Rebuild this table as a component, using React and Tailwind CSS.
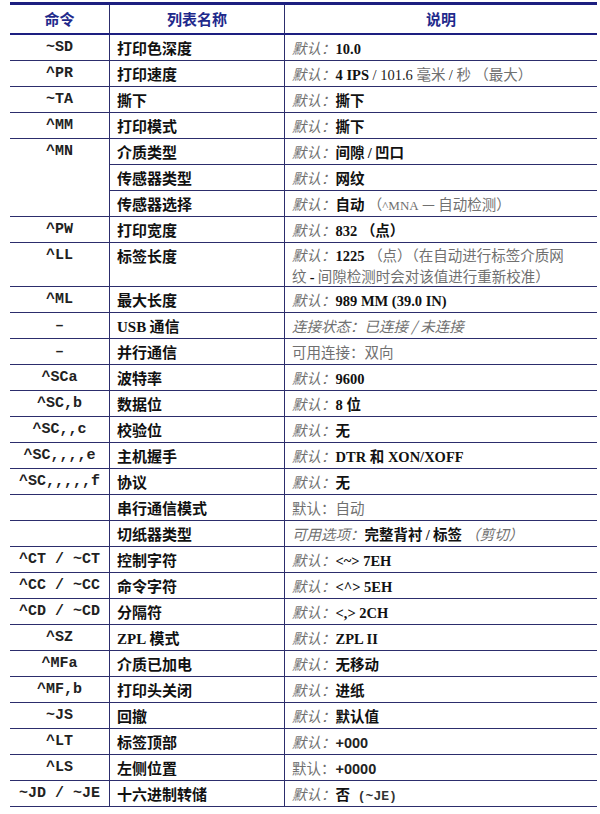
import React from 'react';

const mono = "font-['Liberation_Mono',monospace]";
const cjk = "font-['Noto_Sans_CJK_SC',sans-serif]";
const serif = "font-['Liberation_Serif','Noto_Sans_CJK_SC',serif]";
const sans = "font-['Liberation_Sans','Noto_Sans_CJK_SC',sans-serif]";

// small text helpers
const Def = ({ label = '默认：' }) => (
  <span className={`${cjk} italic text-[#707070]`}>{label}</span>
);
const Plain = ({ children }) => <span className={`${cjk} text-[#707070]`}>{children}</span>;
const B = ({ children }) => <span className={`${serif} font-bold text-[#111]`}>{children}</span>;
const BC = ({ children }) => <span className={`${cjk} font-bold text-[#111]`}>{children}</span>;

const rows = [
  { cmd: '~SD', name: '打印色深度', desc: <><Def /><B>10.0</B></> },
  {
    cmd: '^PR',
    name: '打印速度',
    desc: (
      <>
        <Def />
        <B>4 IPS</B>
        <span className={`${serif} text-[#222]`}> / 101.6 </span>
        <Plain>毫米 </Plain>
        <span className={`${serif} text-[#222]`}>/ </span>
        <Plain>秒 （最大）</Plain>
      </>
    ),
  },
  { cmd: '~TA', name: '撕下', desc: <><Def /><BC>撕下</BC></> },
  { cmd: '^MM', name: '打印模式', desc: <><Def /><BC>撕下</BC></> },
  {
    cmd: '^MN',
    group: [
      { name: '介质类型', desc: <><Def /><BC>间隙 </BC><B>/</B><BC> 凹口</BC></> },
      { name: '传感器类型', desc: <><Def /><BC>网纹</BC></> },
      {
        name: '传感器选择',
        desc: (
          <>
            <Def />
            <BC>自动</BC>
            <Plain> （</Plain>
            <span className={`${serif} text-[13px] text-[#707070]`}>^MNA</span>
            <Plain> — 自动检测）</Plain>
          </>
        ),
      },
    ],
  },
  { cmd: '^PW', name: '打印宽度', desc: <><Def /><B>832 </B><BC>（点）</BC></> },
  {
    cmd: '^LL',
    name: '标签长度',
    tall: true,
    desc: (
      <>
        <Def />
        <B>1225 </B>
        <Plain>（点）（在自动进行标签介质网</Plain>
        <br />
        <Plain>纹 </Plain>
        <B>-</B>
        <Plain> 间隙检测时会对该值进行重新校准）</Plain>
      </>
    ),
  },
  { cmd: '^ML', name: '最大长度', desc: <><Def /><B>989 MM (39.0 IN)</B></> },
  {
    cmd: '–',
    name: <><span className={`${serif} font-bold`}>USB</span> 通信</>,
    desc: <span className={`${cjk} italic text-[#707070]`}>连接状态：已连接 / 未连接</span>,
  },
  { cmd: '–', name: '并行通信', desc: <Plain>可用连接：双向</Plain> },
  { cmd: '^SCa', name: '波特率', desc: <><Def /><B>9600</B></> },
  { cmd: '^SC,b', name: '数据位', desc: <><Def /><B>8 </B><BC>位</BC></> },
  { cmd: '^SC,,c', name: '校验位', desc: <><Def /><BC>无</BC></> },
  { cmd: '^SC,,,,e', name: '主机握手', desc: <><Def /><B>DTR </B><BC>和</BC><B> XON/XOFF</B></> },
  { cmd: '^SC,,,,,f', name: '协议', desc: <><Def /><BC>无</BC></> },
  { cmd: '', name: '串行通信模式', desc: <Plain>默认：自动</Plain> },
  {
    cmd: '',
    name: '切纸器类型',
    desc: (
      <>
        <Def label="可用选项：" />
        <BC>完整背衬 </BC>
        <B>/</B>
        <BC> 标签</BC>
        <span className={`${cjk} italic text-[#707070]`}> （剪切）</span>
      </>
    ),
  },
  { cmd: '^CT / ~CT', name: '控制字符', desc: <><Def /><B>&lt;~&gt; 7EH</B></> },
  { cmd: '^CC / ~CC', name: '命令字符', desc: <><Def /><B>&lt;^&gt; 5EH</B></> },
  { cmd: '^CD / ~CD', name: '分隔符', desc: <><Def /><B>&lt;,&gt; 2CH</B></> },
  {
    cmd: '^SZ',
    name: <><span className={`${serif} font-bold`}>ZPL</span> 模式</>,
    desc: <><Def /><B>ZPL II</B></>,
  },
  { cmd: '^MFa', name: '介质已加电', desc: <><Def /><BC>无移动</BC></> },
  { cmd: '^MF,b', name: '打印头关闭', desc: <><Def /><BC>进纸</BC></> },
  { cmd: '~JS', name: '回撤', desc: <><Def /><BC>默认值</BC></> },
  {
    cmd: '^LT',
    name: '标签顶部',
    desc: <><Def /><span className={`${sans} font-bold text-[#222]`}>+000</span></>,
  },
  {
    cmd: '^LS',
    name: '左侧位置',
    desc: <><Plain>默认：</Plain><span className={`${sans} font-bold text-[#222]`}>+0000</span></>,
  },
  {
    cmd: '~JD / ~JE',
    name: '十六进制转储',
    desc: (
      <>
        <Def />
        <BC>否</BC>
        <span className={`${mono} font-bold text-[13px] text-[#333]`}> (~JE)</span>
      </>
    ),
  },
];

const line = 'border-[#2c2d6c]';

function CmdCell({ children, className = '' }) {
  return (
    <div
      className={`border-b border-r ${line} ${mono} flex justify-center pt-[3px] text-[15px] leading-[20px] font-bold text-[#222] whitespace-pre ${className}`}
    >
      {children}
    </div>
  );
}

function NameCell({ children, tall }) {
  return (
    <div
      className={`border-b border-r ${line} ${cjk} pl-[7px] pt-[2px] text-[15px] leading-[21px] font-bold text-[#111] ${tall ? 'h-[44px]' : 'h-[26px]'}`}
    >
      {children}
    </div>
  );
}

function DescCell({ children, tall }) {
  return (
    <div
      className={`border-b ${line} pl-[7px] pt-[2px] text-[14.5px] ${tall ? 'h-[44px] leading-[19px]' : 'h-[26px] leading-[21px]'} whitespace-nowrap`}
    >
      {children}
    </div>
  );
}

export default function App() {
  return (
    <div className="bg-white w-[600px] h-[814px] pt-[2px] pl-[10px]">
      <div className="w-[587px] grid grid-cols-[100px_175px_312px] border-t-[3px] border-[#1d1f80]">
        {/* Header */}
        {['命令', '列表名称', '说明'].map((h, i) => (
          <div
            key={h}
            className={`h-[30px] border-b-2 border-[#1d1f80] ${i < 2 ? 'border-r border-r-[#2c2d6c]' : ''} ${cjk} flex items-center justify-center text-[15px] font-bold text-[#1f2a8c]`}
          >
            {h}
          </div>
        ))}

        {rows.map((r, idx) => {
          if (r.group) {
            return (
              <React.Fragment key={idx}>
                <CmdCell className="row-span-3">{r.cmd}</CmdCell>
                {r.group.map((g, j) => (
                  <React.Fragment key={j}>
                    <NameCell>{g.name}</NameCell>
                    <DescCell>{g.desc}</DescCell>
                  </React.Fragment>
                ))}
              </React.Fragment>
            );
          }
          return (
            <React.Fragment key={idx}>
              <CmdCell className={r.tall ? 'h-[44px]' : 'h-[26px]'}>{r.cmd}</CmdCell>
              <NameCell tall={r.tall}>{r.name}</NameCell>
              <DescCell tall={r.tall}>{r.desc}</DescCell>
            </React.Fragment>
          );
        })}
      </div>
    </div>
  );
}
